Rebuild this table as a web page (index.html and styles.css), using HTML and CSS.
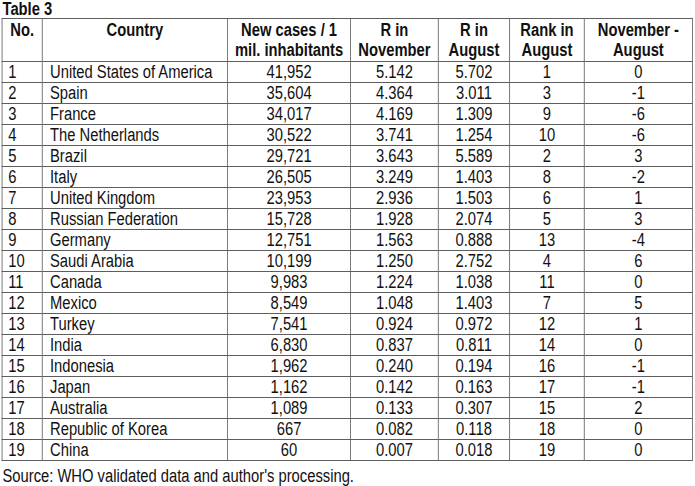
FILE: index.html
```html
<!DOCTYPE html>
<html lang="en">
<head>
<meta charset="utf-8">
<title>Table 3</title>
<link rel="stylesheet" href="styles.css">
</head>
<body>
<div class="frame">
<div class="page">
  <div class="caption">Table 3</div>
  <table class="data">
    <colgroup>
      <col class="c-no"><col class="c-country"><col class="c-cases"><col class="c-rnov"><col class="c-raug"><col class="c-rank"><col class="c-diff">
    </colgroup>
    <thead>
      <tr>
        <th class="top">No.</th>
        <th class="top">Country</th>
        <th>New cases / 1<br>mil. inhabitants</th>
        <th>R in<br>November</th>
        <th>R in<br>August</th>
        <th>Rank in<br>August</th>
        <th>November -<br>August</th>
      </tr>
    </thead>
    <tbody>
      <tr><td class="no">1</td><td class="name">United States of America</td><td>41,952</td><td>5.142</td><td>5.702</td><td>1</td><td>0</td></tr>
      <tr><td class="no">2</td><td class="name">Spain</td><td>35,604</td><td>4.364</td><td>3.011</td><td>3</td><td>-1</td></tr>
      <tr><td class="no">3</td><td class="name">France</td><td>34,017</td><td>4.169</td><td>1.309</td><td>9</td><td>-6</td></tr>
      <tr><td class="no">4</td><td class="name">The Netherlands</td><td>30,522</td><td>3.741</td><td>1.254</td><td>10</td><td>-6</td></tr>
      <tr><td class="no">5</td><td class="name">Brazil</td><td>29,721</td><td>3.643</td><td>5.589</td><td>2</td><td>3</td></tr>
      <tr><td class="no">6</td><td class="name">Italy</td><td>26,505</td><td>3.249</td><td>1.403</td><td>8</td><td>-2</td></tr>
      <tr><td class="no">7</td><td class="name">United Kingdom</td><td>23,953</td><td>2.936</td><td>1.503</td><td>6</td><td>1</td></tr>
      <tr><td class="no">8</td><td class="name">Russian Federation</td><td>15,728</td><td>1.928</td><td>2.074</td><td>5</td><td>3</td></tr>
      <tr><td class="no">9</td><td class="name">Germany</td><td>12,751</td><td>1.563</td><td>0.888</td><td>13</td><td>-4</td></tr>
      <tr><td class="no">10</td><td class="name">Saudi Arabia</td><td>10,199</td><td>1.250</td><td>2.752</td><td>4</td><td>6</td></tr>
      <tr><td class="no">11</td><td class="name">Canada</td><td>9,983</td><td>1.224</td><td>1.038</td><td>11</td><td>0</td></tr>
      <tr><td class="no">12</td><td class="name">Mexico</td><td>8,549</td><td>1.048</td><td>1.403</td><td>7</td><td>5</td></tr>
      <tr><td class="no">13</td><td class="name">Turkey</td><td>7,541</td><td>0.924</td><td>0.972</td><td>12</td><td>1</td></tr>
      <tr><td class="no">14</td><td class="name">India</td><td>6,830</td><td>0.837</td><td>0.811</td><td>14</td><td>0</td></tr>
      <tr><td class="no">15</td><td class="name">Indonesia</td><td>1,962</td><td>0.240</td><td>0.194</td><td>16</td><td>-1</td></tr>
      <tr><td class="no">16</td><td class="name">Japan</td><td>1,162</td><td>0.142</td><td>0.163</td><td>17</td><td>-1</td></tr>
      <tr><td class="no">17</td><td class="name">Australia</td><td>1,089</td><td>0.133</td><td>0.307</td><td>15</td><td>2</td></tr>
      <tr><td class="no">18</td><td class="name">Republic of Korea</td><td>667</td><td>0.082</td><td>0.118</td><td>18</td><td>0</td></tr>
      <tr><td class="no">19</td><td class="name">China</td><td>60</td><td>0.007</td><td>0.018</td><td>19</td><td>0</td></tr>
    </tbody>
  </table>
  <div class="source">Source: WHO validated data and author's processing.</div>
</div>
</div>
</body>
</html>
```

FILE: styles.css
```css
html, body {
  margin: 0;
  padding: 0;
  background: #ffffff;
  overflow: hidden;
}

.frame {
  width: 695px;
  height: 486px;
  overflow: hidden;
}

/* Arial Narrow is Arial compressed to ~82%; reproduce it by compressing the sheet horizontally */
.page {
  width: 848px;
  height: 486px;
  padding: 0 0 0 2px;
  box-sizing: border-box;
  font-family: "Liberation Sans", Arial, sans-serif;
  font-size: 18px;
  color: #111111;
  transform: scaleX(0.82);
  transform-origin: 0 0;
}

.caption {
  font-weight: bold;
  height: 18px;
  line-height: 18px;
  padding-left: 1px;
}

.data {
  border-collapse: collapse;
  table-layout: fixed;
  width: 842px;
  border: 1px solid #5e5e5e;
}

.c-no { width: 49px; }
.c-country { width: 226px; }
.c-cases { width: 150px; }
.c-rnov { width: 107px; }
.c-raug { width: 87px; }
.c-rank { width: 91px; }
.c-diff { width: 132px; }

.data th,
.data td {
  border: 1px solid #5e5e5e;
  padding: 0;
  text-align: center;
  white-space: nowrap;
}

.data th {
  font-weight: bold;
  line-height: 20px;
  height: 41px;
  vertical-align: middle;
}

.data th.top {
  vertical-align: top;
  padding-top: 1px;
}

.data td {
  line-height: 20px;
  height: 20px;
}

.data td.no {
  text-align: left;
  padding-left: 7px;
}

.data td.name {
  text-align: left;
  padding-left: 9px;
}

.source {
  margin-top: 4px;
  line-height: 22px;
  padding-left: 1px;
}
```
